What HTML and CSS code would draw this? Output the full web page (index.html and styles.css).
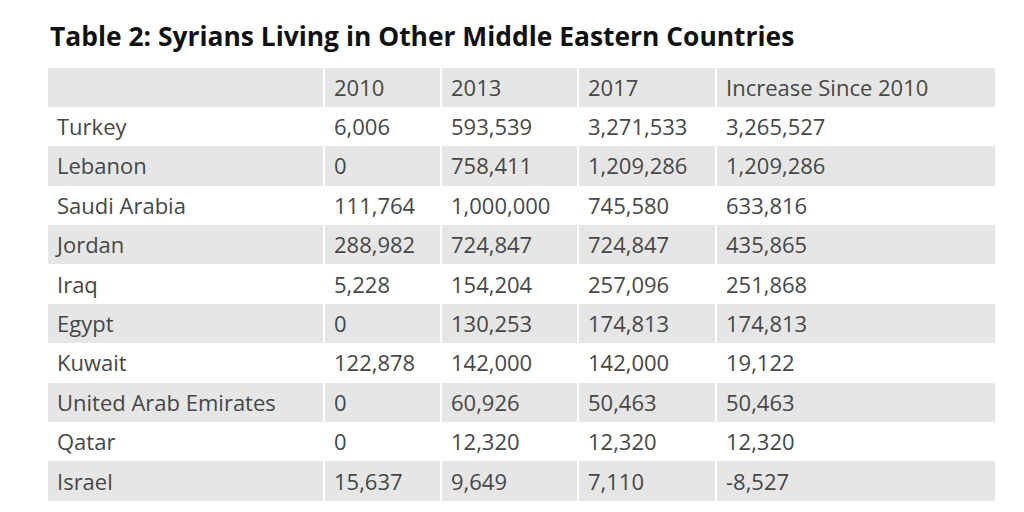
FILE: index.html
```html
<!DOCTYPE html>
<html>
<head>
<meta charset="utf-8">
<link rel="stylesheet" href="styles.css">
</head>
<body>
<div class="wrap">
  <h1 class="title">Table 2: Syrians Living in Other Middle Eastern Countries</h1>
  <table class="data">
    <colgroup>
      <col class="c1"><col class="c2"><col class="c3"><col class="c4"><col class="c5">
    </colgroup>
    <tr class="shade"><td></td><td>2010</td><td>2013</td><td>2017</td><td>Increase Since 2010</td></tr>
    <tr><td>Turkey</td><td>6,006</td><td>593,539</td><td>3,271,533</td><td>3,265,527</td></tr>
    <tr class="shade"><td>Lebanon</td><td>0</td><td>758,411</td><td>1,209,286</td><td>1,209,286</td></tr>
    <tr><td>Saudi Arabia</td><td>111,764</td><td>1,000,000</td><td>745,580</td><td>633,816</td></tr>
    <tr class="shade"><td>Jordan</td><td>288,982</td><td>724,847</td><td>724,847</td><td>435,865</td></tr>
    <tr><td>Iraq</td><td>5,228</td><td>154,204</td><td>257,096</td><td>251,868</td></tr>
    <tr class="shade"><td>Egypt</td><td>0</td><td>130,253</td><td>174,813</td><td>174,813</td></tr>
    <tr><td>Kuwait</td><td>122,878</td><td>142,000</td><td>142,000</td><td>19,122</td></tr>
    <tr class="shade"><td>United Arab Emirates</td><td>0</td><td>60,926</td><td>50,463</td><td>50,463</td></tr>
    <tr><td>Qatar</td><td>0</td><td>12,320</td><td>12,320</td><td>12,320</td></tr>
    <tr class="shade"><td>Israel</td><td>15,637</td><td>9,649</td><td>7,110</td><td>-8,527</td></tr>
  </table>
</div>
</body>
</html>
```

FILE: styles.css
```css
html, body {
  margin: 0;
  padding: 0;
  background: #ffffff;
}
.wrap {
  padding: 18px 0 0 46px;
  font-family: "Open Sans", "Liberation Sans", sans-serif;
}
.title {
  margin: 0 0 13.5px 4px;
  font-size: 26.4px;
  font-weight: 700;
  line-height: 36px;
  color: #111111;
}
.data {
  border-collapse: separate;
  border-spacing: 2px 0;
  table-layout: fixed;
  width: 951px;
  font-size: 22px;
  color: #474747;
}
.c1 { width: 275px; }
.c2 { width: 115px; }
.c3 { width: 135px; }
.c4 { width: 136px; }
.c5 { width: 278px; }
.data td {
  height: 39.4px;
  padding: 0 9px;
  line-height: 27px;
  white-space: nowrap;
  box-sizing: border-box;
}
.shade td {
  background: #e6e6e6;
}
```
